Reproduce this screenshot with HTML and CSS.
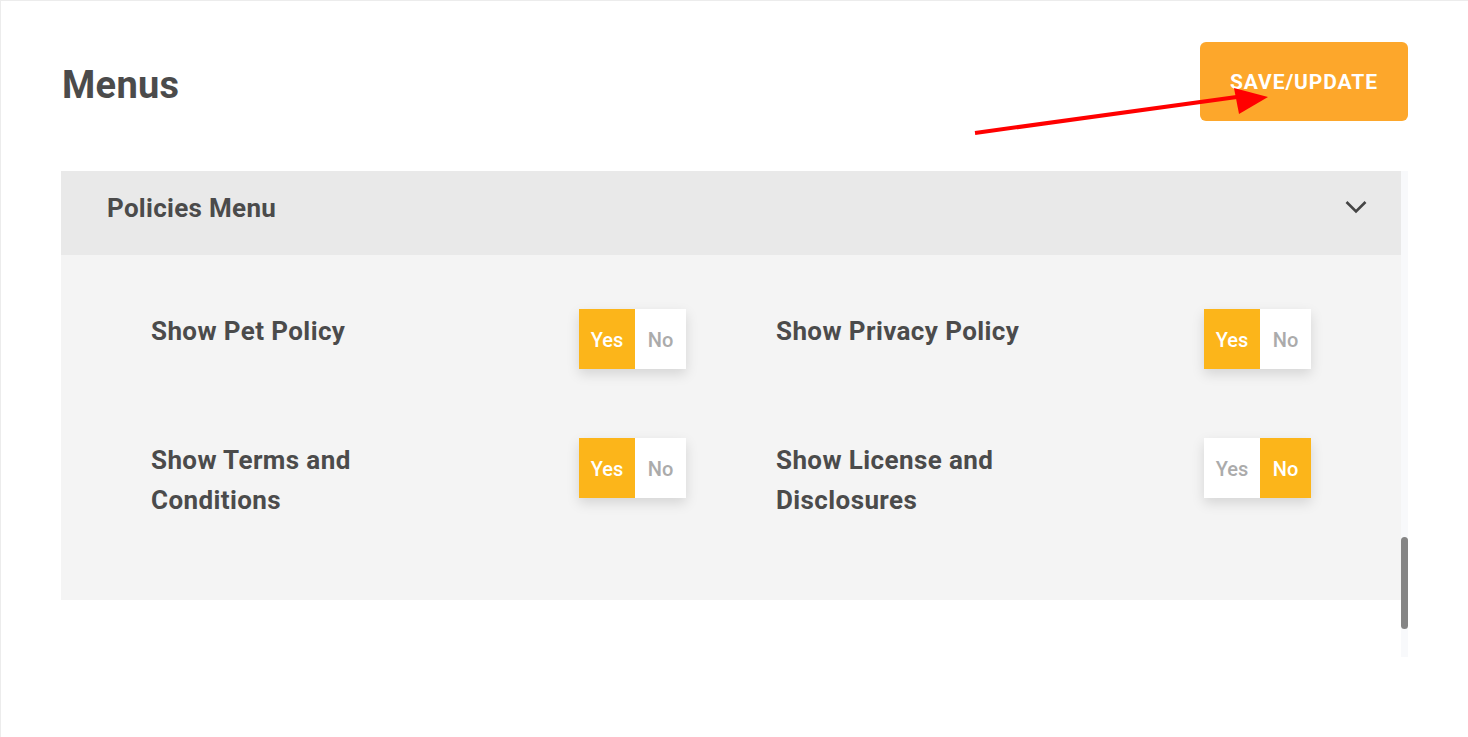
FILE: index.html
```html
<!DOCTYPE html>
<html lang="en">
<head>
<meta charset="utf-8">
<title>Menus</title>
<link rel="stylesheet" href="styles.css">
</head>
<body>
<div class="page">
  <header class="top">
    <h1 class="title">Menus</h1>
    <button class="save" type="button">SAVE/UPDATE</button>
  </header>
  <div class="panel-wrap">
    <section class="panel">
      <div class="panel-head">
        <h2 class="panel-title">Policies Menu</h2>
        <svg class="chev" width="22" height="14" viewBox="0 0 22 14"><path d="M1.5 2 L11 11.5 L20.5 2" fill="none" stroke="#454545" stroke-width="2.6"/></svg>
      </div>
      <div class="panel-body">
        <div class="item">
          <div class="label">Show Pet Policy</div>
          <div class="toggle"><span class="opt on">Yes</span><span class="opt">No</span></div>
        </div>
        <div class="item">
          <div class="label">Show Privacy Policy</div>
          <div class="toggle"><span class="opt on">Yes</span><span class="opt">No</span></div>
        </div>
        <div class="item">
          <div class="label">Show Terms and Conditions</div>
          <div class="toggle"><span class="opt on">Yes</span><span class="opt">No</span></div>
        </div>
        <div class="item">
          <div class="label">Show License and Disclosures</div>
          <div class="toggle"><span class="opt">Yes</span><span class="opt on">No</span></div>
        </div>
      </div>
    </section>
    <div class="track"><div class="thumb"></div></div>
  </div>
  <svg class="arrow" width="320" height="60" viewBox="0 0 320 60">
    <line x1="3" y1="54" x2="272" y2="17" stroke="#ff0000" stroke-width="4"/>
    <polygon points="296,18 262,9 267,35" fill="#ff0000"/>
  </svg>
</div>
</body>
</html>
```
FILE: styles.css
```css
* { box-sizing: border-box; }
html, body { margin: 0; padding: 0; background: #fff; }
body {
  font-family: Roboto, "Liberation Sans", sans-serif;
  color: #4a4a4a;
}
.page {
  position: relative;
  width: 1468px;
  height: 737px;
  border-top: 1px solid #ececec;
  border-left: 1px solid #ececec;
  overflow: hidden;
}
.top {
  display: flex;
  justify-content: space-between;
  align-items: flex-start;
  padding: 41px 60px 0 60px;
  height: 170px;
}
.title {
  margin: 23px 0 0 1px;
  font-size: 38px;
  font-weight: 700;
  line-height: 40px;
  color: #4b4b4b;
  letter-spacing: 0.3px;
}
.save {
  width: 208px;
  height: 79px;
  border: none;
  border-radius: 6px;
  background: #fda72b;
  color: #fff;
  font-family: Roboto, "Liberation Sans", sans-serif;
  font-size: 21px;
  font-weight: 700;
  letter-spacing: 0.9px;
  padding: 0;
}
.panel-wrap {
  display: flex;
  align-items: flex-start;
  padding-left: 60px;
}
.panel { width: 1340px; }
.panel-head {
  height: 84px;
  background: #e9e9e9;
  display: flex;
  align-items: center;
  justify-content: space-between;
  padding: 0 34px 10px 46px;
}
.panel-title {
  margin: 0;
  font-size: 26px;
  font-weight: 700;
  color: #4b4b4b;
  letter-spacing: 0.3px;
}
.chev { margin-top: -2px; }
.panel-body {
  background: #f4f4f4;
  height: 345px;
  padding: 54px 90px 0 90px;
  display: grid;
  grid-template-columns: 535px 535px;
  column-gap: 90px;
  row-gap: 69px;
  align-content: start;
}
.item {
  display: flex;
  justify-content: space-between;
  align-items: flex-start;
}
.label {
  width: 270px;
  padding-top: 2px;
  font-size: 26px;
  font-weight: 700;
  line-height: 40px;
  color: #4b4b4b;
  letter-spacing: 0.4px;
}
.toggle {
  display: flex;
  height: 60px;
  box-shadow: 0 5px 12px rgba(0,0,0,0.13);
}
.opt {
  display: flex;
  align-items: center;
  justify-content: center;
  padding-top: 2px;
  background: #fff;
  color: #ababab;
  font-size: 20px;
  font-weight: 500;
}
.opt:first-child { width: 56px; }
.opt:last-child { width: 51px; }
.opt.on { background: #fcb51a; color: #fff; }
.track {
  width: 7px;
  height: 486px;
  background: #f8f9fb;
  padding-top: 366px;
}
.thumb {
  width: 7px;
  height: 92px;
  background: #858585;
  border-radius: 4px;
}
.arrow {
  position: absolute;
  left: 971px;
  top: 78px;
}
```
